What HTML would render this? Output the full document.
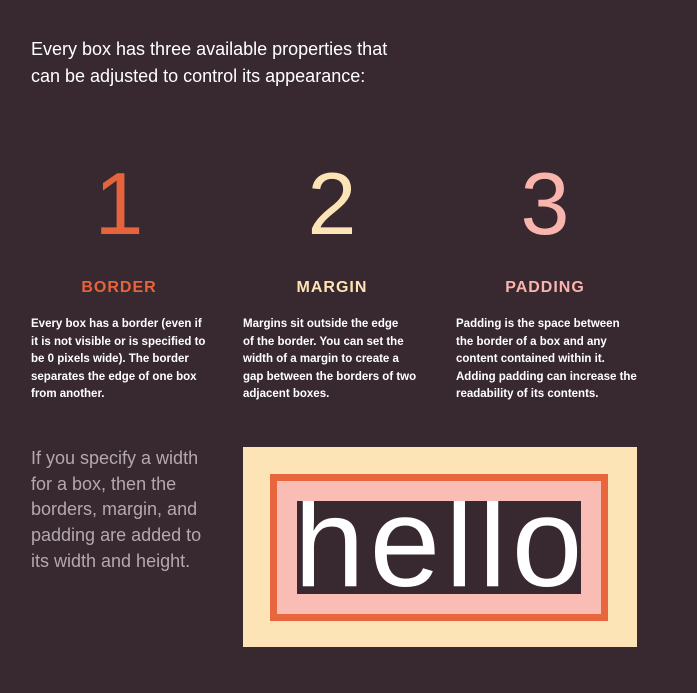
<!DOCTYPE html>
<html><head><style>
body{margin:0;width:697px;height:693px;background:#382930;font-family:"Liberation Sans",sans-serif;position:relative;overflow:hidden}
.a{position:absolute}
.h{left:31px;top:36px;color:#fff;font-size:18px;line-height:27px}
.n{top:160px;font-size:88px;line-height:88px;font-weight:normal;width:100px;text-align:center}
.t{top:279px;font-size:16px;font-weight:bold;letter-spacing:1px;width:200px;text-align:center}
.p{top:316px;color:#fff;font-size:11.5px;font-weight:bold;line-height:17.5px;white-space:nowrap}
</style></head><body>
<div class="a h">Every box has three available properties that<br>can be adjusted to control its appearance:</div>
<div class="a n" style="left:69px;color:#e5643c">1</div>
<div class="a n" style="left:282px;color:#fde4b6">2</div>
<div class="a n" style="left:495px;color:#f9b5ad">3</div>
<div class="a t" style="left:19px;color:#e5643c">BORDER</div>
<div class="a t" style="left:232px;color:#fde4b6">MARGIN</div>
<div class="a t" style="left:445px;color:#f9b5ad">PADDING</div>
<div class="a p" style="left:31px">Every box has a border (even if<br>it is not visible or is specified to<br>be 0 pixels wide). The border<br>separates the edge of one box<br>from another.</div>
<div class="a p" style="left:243px">Margins sit outside the edge<br>of the border. You can set the<br>width of a margin to create a<br>gap between the borders of two<br>adjacent boxes.</div>
<div class="a p" style="left:456px">Padding is the space between<br>the border of a box and any<br>content contained within it.<br>Adding padding can increase the<br>readability of its contents.</div>
<div class="a" style="left:31px;top:446px;color:#b3a8ac;font-size:18px;line-height:25.7px;width:190px">If you specify a width for a box, then the borders, margin, and padding are added to its width and height.</div>
<div class="a" style="left:243px;top:447px;width:394px;height:200px;background:#fde4b6"></div>
<div class="a" style="left:270px;top:474px;width:324px;height:133px;background:#f9bdb5;border:7px solid #e8663d"></div>
<div class="a" style="left:297px;top:501px;width:284px;height:93px;background:#382930;overflow:hidden;clip-path:inset(0)">
<div style="position:absolute;left:-3px;top:-22px;color:#fff;font-size:127px;line-height:127px;letter-spacing:5px;white-space:nowrap">hello</div></div>
</body></html>
